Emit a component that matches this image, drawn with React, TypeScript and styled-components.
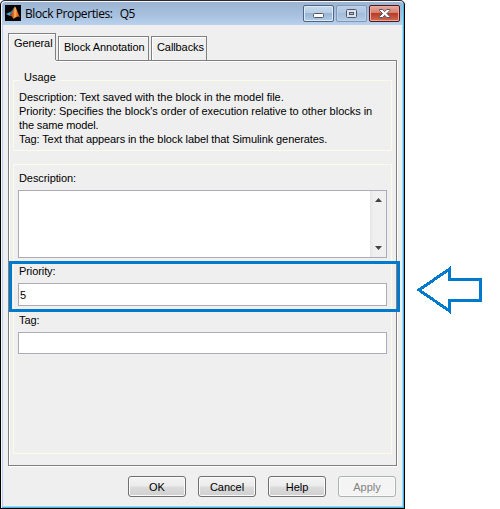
import React from 'react';
import styled, { createGlobalStyle } from 'styled-components';

const Global = createGlobalStyle`
  * { box-sizing: border-box; }
  body { margin: 0; background: #fff; font: 11px/14px "Liberation Sans", Arial, sans-serif; color: #000; overflow: hidden; }
`;

const Page = styled.div`
  display: flex;
  align-items: flex-start;
  width: 500px;
  height: 509px;
`;

const Dialog = styled.section`
  position: relative;
  display: flex;
  flex-direction: column;
  width: 405px;
  height: 509px;
  padding: 1px 2px 2px 2px;
  background: #b5cfec;
  border: 1px solid #000;
  border-top-color: #2c2630;
  border-radius: 5px 5px 0 0;
  box-shadow: inset 1px 1px #f5f9fe, inset -1px -1px #35bfe6;
`;

const TitleBar = styled.header`
  display: flex;
  flex: none;
  align-items: flex-start;
  height: 23px;
  margin: 0 -1px;
  padding: 3px 3px 0 3px;
  border-radius: 4px 4px 0 0;
  background: linear-gradient(#9ab4d2, #a6c0de 55%, #b8d0ec);
`;

const Logo = styled.svg`
  display: block;
  flex: none;
`;

const Title = styled.h1`
  flex: 1;
  margin: 0 0 0 4px;
  font: 12px/17px "Open Sans", sans-serif;
  letter-spacing: -0.4px;
  white-space: pre;
  span { margin-left: 7px; }
`;

const Controls = styled.div`
  display: flex;
  gap: 2px;
`;

const Control = styled.button<{ $kind: 'normal' | 'muted' | 'close' }>`
  width: 31px;
  height: 17px;
  padding: 0;
  border-radius: 2px;
  border: 1px solid ${p => (p.$kind === 'close' ? '#4d1620' : p.$kind === 'muted' ? '#7f98b8' : '#53657e')};
  background: ${p =>
    p.$kind === 'close'
      ? 'linear-gradient(#e6a99c, #d57f70 45%, #ba3b26 50%, #cd6c51)'
      : p.$kind === 'muted'
        ? 'linear-gradient(#b8cee6, #adc6e1 48%, #a0bcda 50%, #b4cdea)'
        : 'linear-gradient(#c8daed, #b6cde5 48%, #98b5d3 50%, #b1cce9)'};
  box-shadow: inset 0 0 0 1px ${p => (p.$kind === 'close' ? '#eba99b' : p.$kind === 'muted' ? '#bdd2e9' : '#dce9f7')};
  svg { display: block; }
`;

const Body = styled.div`
  flex: 1;
  display: flex;
  flex-direction: column;
  padding: 8px 4px 0 5px;
  background: #efefef;
`;

const TabStrip = styled.nav`
  display: flex;
  align-items: flex-end;
  height: 27px;
`;

const Tab = styled.div<{ $width: number; $active?: boolean }>`
  width: ${p => p.$width}px;
  height: ${p => (p.$active ? 27 : 24)}px;
  margin-right: 2px;
  padding: ${p => (p.$active ? '2px' : '3px')} 0 0 5px;
  border: solid #808080;
  border-width: 1px 1px 0 1px;
  box-shadow: inset 1px 1px #fff;
  line-height: 14px;
  letter-spacing: -0.09px;
  white-space: nowrap;
`;

const Panel = styled.main`
  display: flex;
  flex-direction: column;
  width: 389px;
  height: 406px;
  padding: 13px 4px 0 4px;
  border: 1px solid #808080;
  border-top: 0;
  background: linear-gradient(#808080, #808080) 47px 0 / 342px 1px no-repeat,
    linear-gradient(#fff, #fff) 47px 1px / 341px 1px no-repeat;
  box-shadow: inset 1px 0 #fff, 1px 1px #fff;
`;

const Usage = styled.section`
  width: 379px;
  height: 71px;
  margin-top: 7px;
  padding: 0 5px;
  border: 1px solid #fcfbe8;
  white-space: pre;
`;

const UsageTitle = styled.h2`
  width: max-content;
  margin: -11px 0 6px 2px;
  padding: 0 3px;
  background: #efefef;
  font-size: 11px;
  font-weight: 400;
  line-height: 14px;
`;

const UsageLine = styled.p<{ $spacing: number }>`
  margin: 0;
  letter-spacing: ${p => p.$spacing}px;
`;

const Properties = styled.div`
  width: 379px;
  height: 290px;
  margin-top: 13px;
  padding: 0 4px;
  border: 1px solid #fcfbe8;
`;

const Field = styled.label<{ $top: number }>`
  display: block;
  padding-top: ${p => p.$top}px;
  span { display: block; padding-left: 1px; line-height: 14px; letter-spacing: -0.09px; }
`;

const TextBox = styled.div<{ $height: number; $gap: number }>`
  display: flex;
  align-items: center;
  width: 369px;
  height: ${p => p.$height}px;
  margin-top: ${p => p.$gap}px;
  padding-left: 1px;
  border: 1px solid #abadb3;
  background: #fff;
`;

const ScrollBar = styled.div`
  display: flex;
  flex-direction: column;
  justify-content: space-between;
  align-items: center;
  width: 16px;
  height: 100%;
  margin-left: auto;
  padding: 7px 0;
  background: linear-gradient(90deg, #e5e5e5, #f0f0f0 20%);
`;

const Buttons = styled.footer`
  display: flex;
  justify-content: flex-end;
  gap: 12px;
  padding: 10px 2px 0 0;
`;

const Button = styled.button`
  width: 58px;
  height: 21px;
  padding: 1px 0 0;
  border: 1px solid #707070;
  border-radius: 3px;
  background: linear-gradient(#f4f4f4, #ebebeb 48%, #dcdcdc 52%, #cfcfcf);
  box-shadow: inset 0 0 0 1px #fbfbfb;
  font: 11px/14px "Liberation Sans", Arial, sans-serif;
  color: #000;
  &:disabled { background: #f4f4f4; border-color: #adb2b5; color: #838383; }
`;

const Highlight = styled.div`
  position: absolute;
  left: 8px;
  top: 260px;
  width: 391px;
  height: 51px;
  border: 3px solid #007acc;
  pointer-events: none;
`;

const Pointer = styled.svg`
  display: block;
  margin: 264px 0 0 11px;
`;

const usage = [
  { text: 'Description: Text saved with the block in the model file.', spacing: -0.03 },
  { text: "Priority: Specifies the block's order of execution relative to other blocks in", spacing: -0.03 },
  { text: 'the same model.', spacing: -0.12 },
  { text: 'Tag: Text that appears in the block label that Simulink generates.', spacing: -0.09 },
];

export default function App() {
  return (
    <Page>
      <Global />
      <Dialog>
        <TitleBar>
          <Logo width="16" height="16" viewBox="0 0 16 16">
            <defs>
              <linearGradient id="flame">
                <stop offset="0" stopColor="#7c2a1c" />
                <stop offset=".4" stopColor="#d9682c" />
                <stop offset=".55" stopColor="#ffb95a" />
                <stop offset=".75" stopColor="#ee6b1d" />
                <stop offset="1" stopColor="#c04a14" />
              </linearGradient>
            </defs>
            <rect width="16" height="16" fill="#050505" />
            <path d="M1 9 5 7 7.5 8.5 5 11z" fill="#45aad6" />
            <path d="M5 7 C7.5 6 8 3 10 1.5 L8.5 9 5 11z" fill="#3a7794" />
            <path d="M4 10.3 C7.5 9 8.5 4 10 1.5 C11.5 3 13 9 15 12 C12.5 10.5 11 12 8.5 14 C8 12 6 11 4 10.3z" fill="url(#flame)" />
          </Logo>
          <Title>Block Properties:<span>Q5</span></Title>
          <Controls>
            <Control $kind="normal" aria-label="Minimize">
              <svg width="29" height="15"><rect x="9.5" y="7.5" width="10" height="4" rx="1" fill="#fff" stroke="#535666" /></svg>
            </Control>
            <Control $kind="muted" aria-label="Maximize">
              <svg width="29" height="15"><rect x="9.5" y="3.5" width="10" height="8" rx="1" fill="#dce3ec" stroke="#535666" /><rect x="12.5" y="6.5" width="4" height="2" fill="#a9c2dd" stroke="#535666" /></svg>
            </Control>
            <Control $kind="close" aria-label="Close">
              <svg width="29" height="15"><path d="M9.5 3.5h3.2l2 2.2 2-2.2h3.2v1l-3 3 3 3v1h-3.2l-2-2.2-2 2.2H9.5v-1l3-3-3-3z" fill="#fff" stroke="#535666" /></svg>
            </Control>
          </Controls>
        </TitleBar>
        <Body>
          <TabStrip>
            <Tab $width={48} $active>General</Tab>
            <Tab $width={91}>Block Annotation</Tab>
            <Tab $width={56}>Callbacks</Tab>
          </TabStrip>
          <Panel>
            <Usage>
              <UsageTitle>Usage</UsageTitle>
              {usage.map(line => <UsageLine key={line.text} $spacing={line.spacing}>{line.text}</UsageLine>)}
            </Usage>
            <Properties>
              <Field $top={6}>
                <span>Description:</span>
                <TextBox $height={68} $gap={5}>
                  <ScrollBar>
                    <svg width="7" height="4"><path d="M0 4 3.5 0 7 4z" fill="#444" /></svg>
                    <svg width="7" height="4"><path d="M0 0H7L3.5 4z" fill="#444" /></svg>
                  </ScrollBar>
                </TextBox>
              </Field>
              <Field $top={6}>
                <span>Priority:</span>
                <TextBox $height={23} $gap={5}>5</TextBox>
              </Field>
              <Field $top={7}>
                <span>Tag:</span>
                <TextBox $height={22} $gap={5} />
              </Field>
            </Properties>
          </Panel>
          <Buttons>
            <Button>OK</Button>
            <Button>Cancel</Button>
            <Button>Help</Button>
            <Button disabled>Apply</Button>
          </Buttons>
        </Body>
        <Highlight />
      </Dialog>
      <Pointer width="68" height="52" shapeRendering="crispEdges">
        <path d="M3 26 33.5 5V15.5H64.5V36.5H33.5V47z" fill="#fff" stroke="#007acc" strokeWidth="3" strokeLinejoin="miter" />
      </Pointer>
    </Page>
  );
}
